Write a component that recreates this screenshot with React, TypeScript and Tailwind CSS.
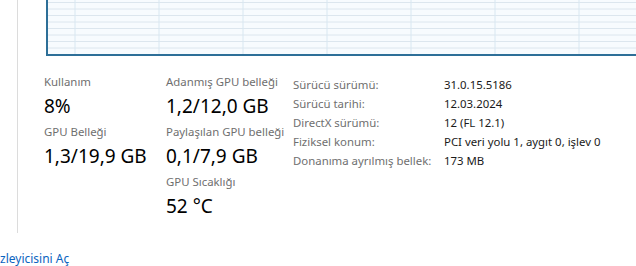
const hLines = [2.5, 9, 15.5, 22, 28.5, 35, 41.5, 48];
const vLines = [27, 111, 195, 279, 363, 447, 531];

function Stat({ label, value }: { label: string; value: string }) {
  return (
    <div className="flex flex-col">
      <div className="text-[11.4px] leading-[16px] text-[#6f6f6f] whitespace-nowrap">{label}</div>
      <div className="mt-[4px] text-[19px] leading-[24px] text-black whitespace-nowrap">{value}</div>
    </div>
  );
}

const details = [
  ["Sürücü sürümü:", "31.0.15.5186"],
  ["Sürücü tarihi:", "12.03.2024"],
  ["DirectX sürümü:", "12 (FL 12.1)"],
  ["Fiziksel konum:", "PCI veri yolu 1, aygıt 0, işlev 0"],
  ["Donanıma ayrılmış bellek:", "173 MB"],
];

export default function App() {
  return (
    <div className="w-[636px] h-[266px] overflow-hidden bg-white font-['Noto_Sans',sans-serif]">
      <div className="flex h-[233px]">
        <div className="w-[18px] shrink-0 border-r border-[#dcdcdc]" />
        <div className="flex-1 min-w-0">
          <div className="ml-[28px] h-[56px] border-l-2 border-b-2 border-[#2d6f98] bg-[#f7fbfe]">
            <svg width="100%" height="100%" className="block">
              {hLines.map((y) => (
                <line key={y} x1="0" x2="700" y1={y} y2={y} stroke="#dce6ee" strokeWidth="1" />
              ))}
              {vLines.map((x) => (
                <line key={x} x1={x} x2={x} y1="0" y2="60" stroke="#d8e7f1" strokeWidth="1" />
              ))}
            </svg>
          </div>

          <div className="flex items-start pl-[26px] pt-[18px]">
            <div className="w-[122px] flex flex-col gap-[6px]">
              <Stat label="Kullanım" value="8%" />
              <Stat label="GPU Belleği" value="1,3/19,9 GB" />
            </div>
            <div className="w-[127px] flex flex-col gap-[6px]">
              <Stat label="Adanmış GPU belleği" value="1,2/12,0 GB" />
              <Stat label="Paylaşılan GPU belleği" value="0,1/7,9 GB" />
              <Stat label="GPU Sıcaklığı" value="52 °C" />
            </div>
            <div className="grid grid-cols-[151px_auto] content-start text-[11.4px] leading-[19px] mt-[1px]">
              {details.map(([k, v]) => (
                <div key={k} className="contents">
                  <div className="text-[#6f6f6f] whitespace-nowrap">{k}</div>
                  <div className="text-[#1a1a1a] whitespace-nowrap">{v}</div>
                </div>
              ))}
            </div>
          </div>
        </div>
      </div>
      <div className="mt-[18px] text-[12px] leading-[16px] text-[#0b64c0] whitespace-nowrap">zleyicisini Aç</div>
    </div>
  );
}
